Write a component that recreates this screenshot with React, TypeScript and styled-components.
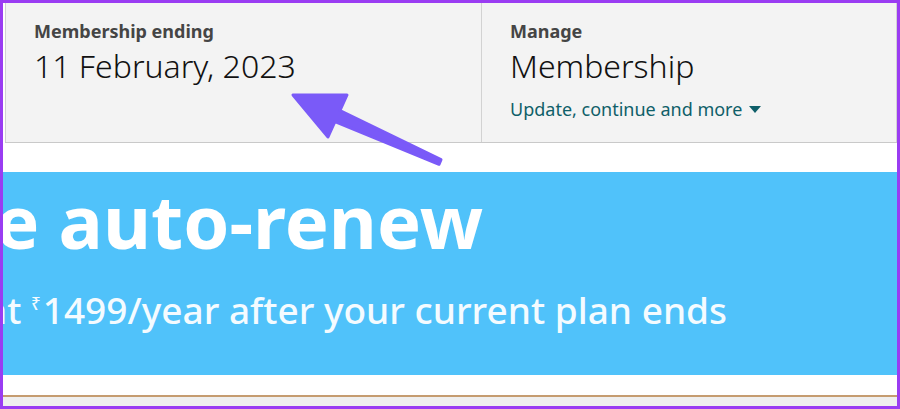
import React from "react";
import styled, { createGlobalStyle } from "styled-components";

const Global = createGlobalStyle`
  html, body { margin: 0; padding: 0; background: #ffffff; }
  body { font-family: "Noto Sans", "Open Sans", Arial, sans-serif; }
  * { box-sizing: border-box; }
`;

const Frame = styled.div`
  position: relative;
  width: 900px;
  height: 409px;
  border: 3px solid #9a3cf2;
  background: #ffffff;
  display: flex;
  flex-direction: column;
  overflow: hidden;
`;

const Header = styled.div`
  display: grid;
  grid-template-columns: 476px 416px;
  margin-left: 2px;
  height: 140px;
  border-bottom: 1px solid #c9c9c9;
  background: #f3f3f3;
  flex: none;
`;

const Cell = styled.div<{ $right?: boolean }>`
  border-left: 1px solid #d2d2d2;
  border-right: ${(p) => (p.$right ? "1px solid #d2d2d2" : "none")};
  padding: 16px 0 0 28px;
  display: flex;
  flex-direction: column;
`;

const Label = styled.div`
  font-size: 18px;
  line-height: 24px;
  font-weight: 700;
  color: #454545;
`;

const Value = styled.div`
  font-size: 32px;
  line-height: 40px;
  font-weight: 300;
  color: #111111;
  margin-top: 3px;
`;

const LinkRow = styled.div`
  display: flex;
  align-items: center;
  gap: 7px;
  margin-top: 11px;
  font-size: 18px;
  line-height: 24px;
  color: #0f5f69;
`;

const Caret = styled.span`
  width: 0;
  height: 0;
  border-left: 6px solid transparent;
  border-right: 6px solid transparent;
  border-top: 7px solid #0f5f69;
  margin-top: 1px;
`;

const Gap = styled.div<{ $h: number }>`
  height: ${(p) => p.$h}px;
  flex: none;
  background: #ffffff;
`;

const Banner = styled.div`
  height: 203px;
  flex: none;
  background: #50c2fa;
  overflow: hidden;
  display: flex;
  flex-direction: column;
  padding-top: 12px;
`;

const BannerLine = styled.div<{ $pad: number }>`
  display: flex;
  justify-content: flex-end;
  white-space: nowrap;
  padding-right: ${(p) => p.$pad}px;
`;

const Heading = styled.span`
  font-size: 74px;
  line-height: 74px;
  font-weight: 700;
  color: #ffffff;
`;

const Sub = styled.span`
  font-size: 37px;
  line-height: 43px;
  font-weight: 500;
  color: #f4fbff;
  margin-top: 24px;
`;

const Rupee = styled.sup`
  font-size: 17px;
  vertical-align: 14px;
  margin-right: 2px;
`;

const Rule = styled.div`
  height: 2px;
  flex: none;
  background: #c59c70;
`;

const Footer = styled.div`
  flex: 1;
  background: #efefef;
`;

const ArrowSvg = styled.svg`
  position: absolute;
  left: -3px;
  top: -3px;
  pointer-events: none;
`;

export default function App() {
  return (
    <>
      <Global />
      <Frame>
        <Header>
          <Cell>
            <Label>Membership ending</Label>
            <Value>11 February, 2023</Value>
          </Cell>
          <Cell $right>
            <Label>Manage</Label>
            <Value>Membership</Value>
            <LinkRow>
              Update, continue and more
              <Caret />
            </LinkRow>
          </Cell>
        </Header>
        <Gap $h={29} />
        <Banner>
          <BannerLine $pad={414}>
            <Heading>Enable auto-renew</Heading>
          </BannerLine>
          <BannerLine $pad={170}>
            <Sub>
              Renew at <Rupee>₹</Rupee>1499/year after your current plan ends
            </Sub>
          </BannerLine>
        </Banner>
        <Gap $h={20} />
        <Rule />
        <Footer />
        <ArrowSvg width="900" height="409" viewBox="0 0 900 409">
          <polygon
            points="293,95 347,95 340,110.5 441,159.7 439,164.3 335,121.5 328,137"
            fill="#7a5af8"
            stroke="#7a5af8"
            strokeWidth="3"
            strokeLinejoin="round"
          />
        </ArrowSvg>
      </Frame>
    </>
  );
}
